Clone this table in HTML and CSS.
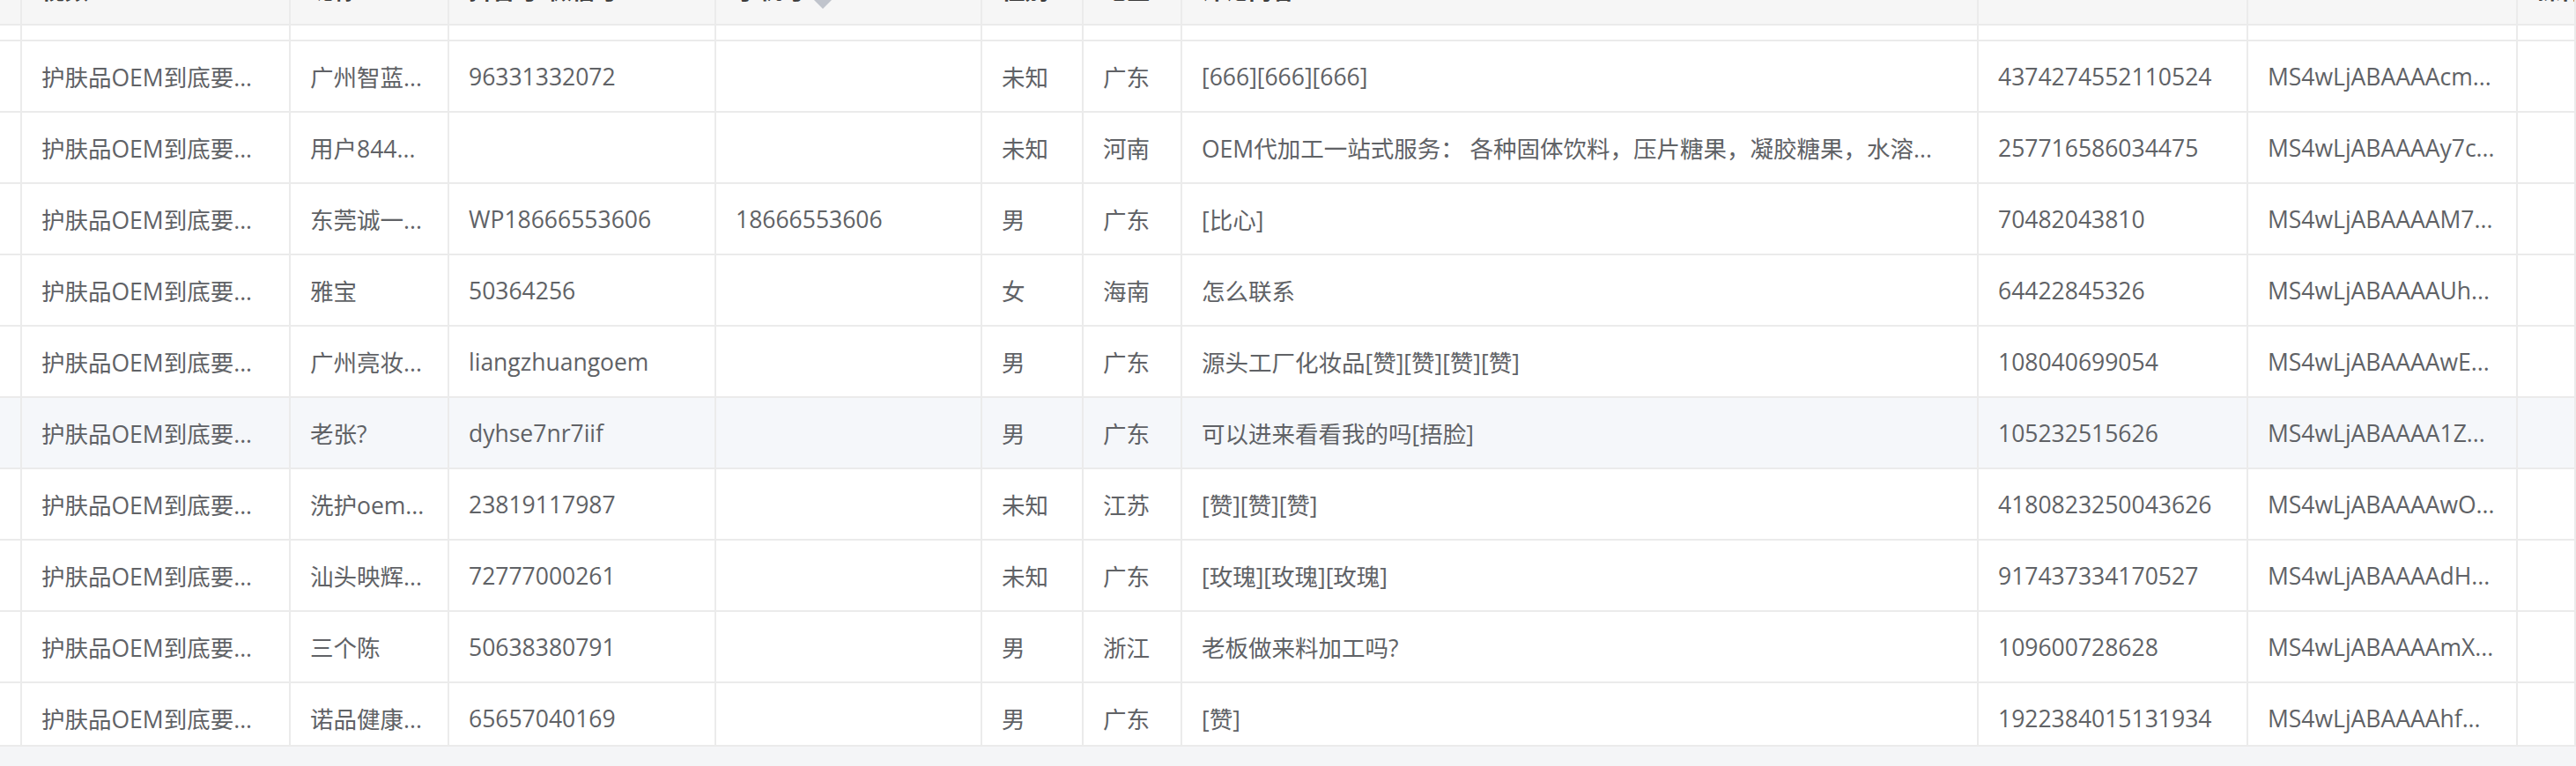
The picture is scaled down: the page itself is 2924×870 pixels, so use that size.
FILE: index.html
```html
<!DOCTYPE html>
<html lang="zh-CN">
<head>
<meta charset="utf-8">
<title>评论列表</title>
<link rel="stylesheet" href="styles.css">
</head>
<body>
<div class="table">
  <div class="row head">
    <div class="cell"></div>
    <div class="cell">视频</div>
    <div class="cell">昵称</div>
    <div class="cell">抖音号/微信号</div>
    <div class="cell"><span>手机号</span><span class="caret"><i class="asc"></i><i class="desc"></i></span></div>
    <div class="cell">性别</div>
    <div class="cell">地区</div>
    <div class="cell">评论内容</div>
    <div class="cell">uid</div>
    <div class="cell">secUid</div>
    <div class="cell">操作</div>
  </div>
  <div class="body">
    <div class="row spacer">
      <div class="cell"></div><div class="cell"></div><div class="cell"></div><div class="cell"></div><div class="cell"></div><div class="cell"></div><div class="cell"></div><div class="cell"></div><div class="cell"></div><div class="cell"></div><div class="cell"></div>
    </div>
    <div class="row">
      <div class="cell"></div><div class="cell">护肤品OEM到底要...</div><div class="cell">广州智蓝...</div><div class="cell">96331332072</div><div class="cell"></div><div class="cell">未知</div><div class="cell">广东</div><div class="cell">[666][666][666]</div><div class="cell">4374274552110524</div><div class="cell">MS4wLjABAAAAcm...</div><div class="cell"></div>
    </div>
    <div class="row">
      <div class="cell"></div><div class="cell">护肤品OEM到底要...</div><div class="cell">用户844...</div><div class="cell"></div><div class="cell"></div><div class="cell">未知</div><div class="cell">河南</div><div class="cell">OEM代加工一站式服务： 各种固体饮料，压片糖果，凝胶糖果，水溶...</div><div class="cell">257716586034475</div><div class="cell">MS4wLjABAAAAy7c...</div><div class="cell"></div>
    </div>
    <div class="row">
      <div class="cell"></div><div class="cell">护肤品OEM到底要...</div><div class="cell">东莞诚一...</div><div class="cell">WP18666553606</div><div class="cell">18666553606</div><div class="cell">男</div><div class="cell">广东</div><div class="cell">[比心]</div><div class="cell">70482043810</div><div class="cell">MS4wLjABAAAAM7...</div><div class="cell"></div>
    </div>
    <div class="row">
      <div class="cell"></div><div class="cell">护肤品OEM到底要...</div><div class="cell">雅宝</div><div class="cell">50364256</div><div class="cell"></div><div class="cell">女</div><div class="cell">海南</div><div class="cell">怎么联系</div><div class="cell">64422845326</div><div class="cell">MS4wLjABAAAAUh...</div><div class="cell"></div>
    </div>
    <div class="row">
      <div class="cell"></div><div class="cell">护肤品OEM到底要...</div><div class="cell">广州亮妆...</div><div class="cell">liangzhuangoem</div><div class="cell"></div><div class="cell">男</div><div class="cell">广东</div><div class="cell">源头工厂化妆品[赞][赞][赞][赞]</div><div class="cell">108040699054</div><div class="cell">MS4wLjABAAAAwE...</div><div class="cell"></div>
    </div>
    <div class="row hover">
      <div class="cell"></div><div class="cell">护肤品OEM到底要...</div><div class="cell">老张?</div><div class="cell">dyhse7nr7iif</div><div class="cell"></div><div class="cell">男</div><div class="cell">广东</div><div class="cell">可以进来看看我的吗[捂脸]</div><div class="cell">105232515626</div><div class="cell">MS4wLjABAAAA1Z...</div><div class="cell"></div>
    </div>
    <div class="row">
      <div class="cell"></div><div class="cell">护肤品OEM到底要...</div><div class="cell">洗护oem...</div><div class="cell">23819117987</div><div class="cell"></div><div class="cell">未知</div><div class="cell">江苏</div><div class="cell">[赞][赞][赞]</div><div class="cell">4180823250043626</div><div class="cell">MS4wLjABAAAAwO...</div><div class="cell"></div>
    </div>
    <div class="row">
      <div class="cell"></div><div class="cell">护肤品OEM到底要...</div><div class="cell">汕头映辉...</div><div class="cell">72777000261</div><div class="cell"></div><div class="cell">未知</div><div class="cell">广东</div><div class="cell">[玫瑰][玫瑰][玫瑰]</div><div class="cell">917437334170527</div><div class="cell">MS4wLjABAAAAdH...</div><div class="cell"></div>
    </div>
    <div class="row">
      <div class="cell"></div><div class="cell">护肤品OEM到底要...</div><div class="cell">三个陈</div><div class="cell">50638380791</div><div class="cell"></div><div class="cell">男</div><div class="cell">浙江</div><div class="cell">老板做来料加工吗?</div><div class="cell">109600728628</div><div class="cell">MS4wLjABAAAAmX...</div><div class="cell"></div>
    </div>
    <div class="row">
      <div class="cell"></div><div class="cell">护肤品OEM到底要...</div><div class="cell">诺品健康...</div><div class="cell">65657040169</div><div class="cell"></div><div class="cell">男</div><div class="cell">广东</div><div class="cell">[赞]</div><div class="cell">1922384015131934</div><div class="cell">MS4wLjABAAAAhf...</div><div class="cell"></div>
    </div>
  </div>
</div>
</body>
</html>
```

FILE: styles.css
```css
* {
  box-sizing: border-box;
}

html,
body {
  margin: 0;
  padding: 0;
}

body {
  height: 870px;
  overflow: hidden;
  background: #f4f5f7;
  font-family: "Open Sans", "Noto Sans CJK SC", sans-serif;
  font-size: 26.5px;
  color: #606266;
}

.table {
  margin-top: -52px;
  background: #fff;
}

.row {
  display: grid;
  grid-template-columns: 25px 305px 180px 303px 302px 115px 112px 904px 306px 306px 1fr;
  border-bottom: 2px solid #ebebeb;
}

.cell {
  min-width: 0;
  height: 79px;
  padding: 0 22px;
  display: flex;
  align-items: center;
  border-right: 2px solid #ebebeb;
  white-space: nowrap;
  overflow: hidden;
}

.cell:first-child {
  padding: 0;
}

.head {
  background: #f6f6f6;
}

.head .cell {
  padding-bottom: 1px;
  font-weight: 700;
  color: #3c3c3c;
}

.caret {
  display: flex;
  flex-direction: column;
  gap: 8px;
  margin-left: 9px;
  margin-top: 17px;
}

.caret i {
  display: block;
  width: 0;
  height: 0;
  border-left: 10px solid transparent;
  border-right: 10px solid transparent;
}

.caret .asc {
  border-bottom: 10px solid #c0c4cc;
}

.caret .desc {
  border-top: 10px solid #c0c4cc;
}

.body {
  height: 819px;
  overflow: hidden;
  border-bottom: 2px solid #ebebeb;
}

.spacer .cell {
  height: 16px;
}

.hover {
  background: #f5f7fa;
}
```
